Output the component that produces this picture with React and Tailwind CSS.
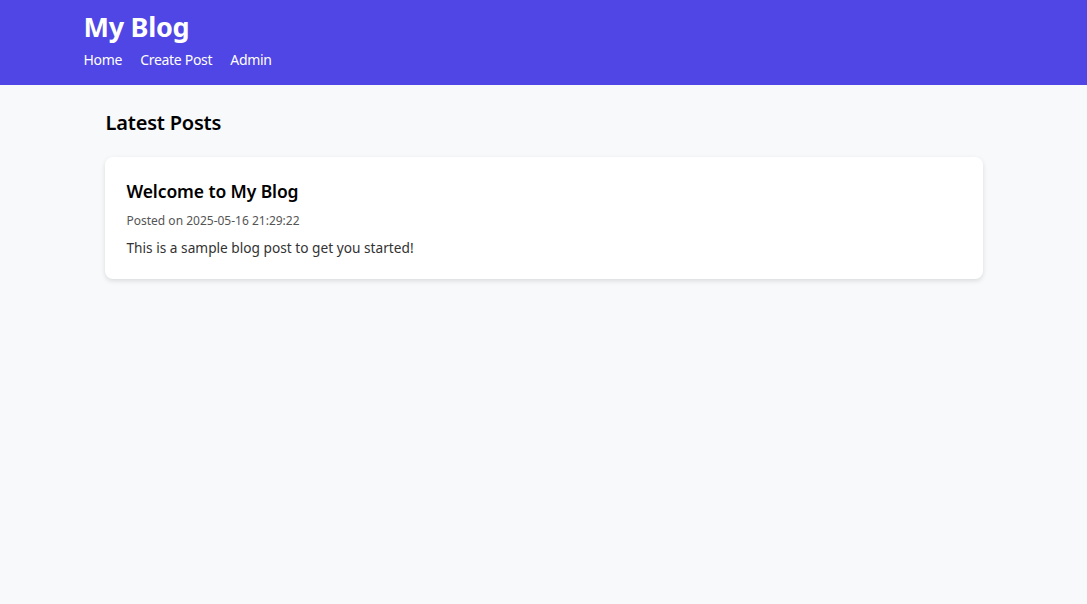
import React from 'react';

const posts = [
  {
    title: 'Welcome to My Blog',
    date: '2025-05-16 21:29:22',
    body: 'This is a sample blog post to get you started!',
  },
];

const App = () => {
  return (
    <div className="min-h-screen bg-[#f8f9fa] font-['Noto_Sans',sans-serif]">
      <header className="bg-[#4f46e5] text-white h-[85px]">
        <div className="max-w-[920px] mx-auto pt-[9px]">
          <h1 className="text-[27px] font-bold leading-[36px] tracking-[-0.3px]">My Blog</h1>
          <nav className="flex gap-[18px] mt-[5px] text-[14px] leading-[20px] tracking-[-0.3px]">
            <a href="#">Home</a>
            <a href="#">Create Post</a>
            <a href="#">Admin</a>
          </nav>
        </div>
      </header>

      <main className="max-w-[878px] mx-auto pt-[24px]">
        <h2 className="text-[20px] font-semibold leading-[28px] text-black pl-[1px] tracking-[-0.2px]">Latest Posts</h2>
        <div className="mt-[20px] flex flex-col gap-5">
          {posts.map((post) => (
            <article
              key={post.title}
              className="bg-white rounded-lg shadow-[0_2px_5px_rgba(0,0,0,0.12)] px-[22px] pt-[22px] pb-[21px]"
            >
              <h3 className="text-[17.5px] font-semibold leading-[24px] text-black tracking-[-0.1px]">{post.title}</h3>
              <p className="text-[12px] text-[#555] mt-[9px] leading-[18px]">Posted on {post.date}</p>
              <p className="text-[13.7px] text-[#333] mt-[8px] leading-[20px]">{post.body}</p>
            </article>
          ))}
        </div>
      </main>
    </div>
  );
};

export default App;
